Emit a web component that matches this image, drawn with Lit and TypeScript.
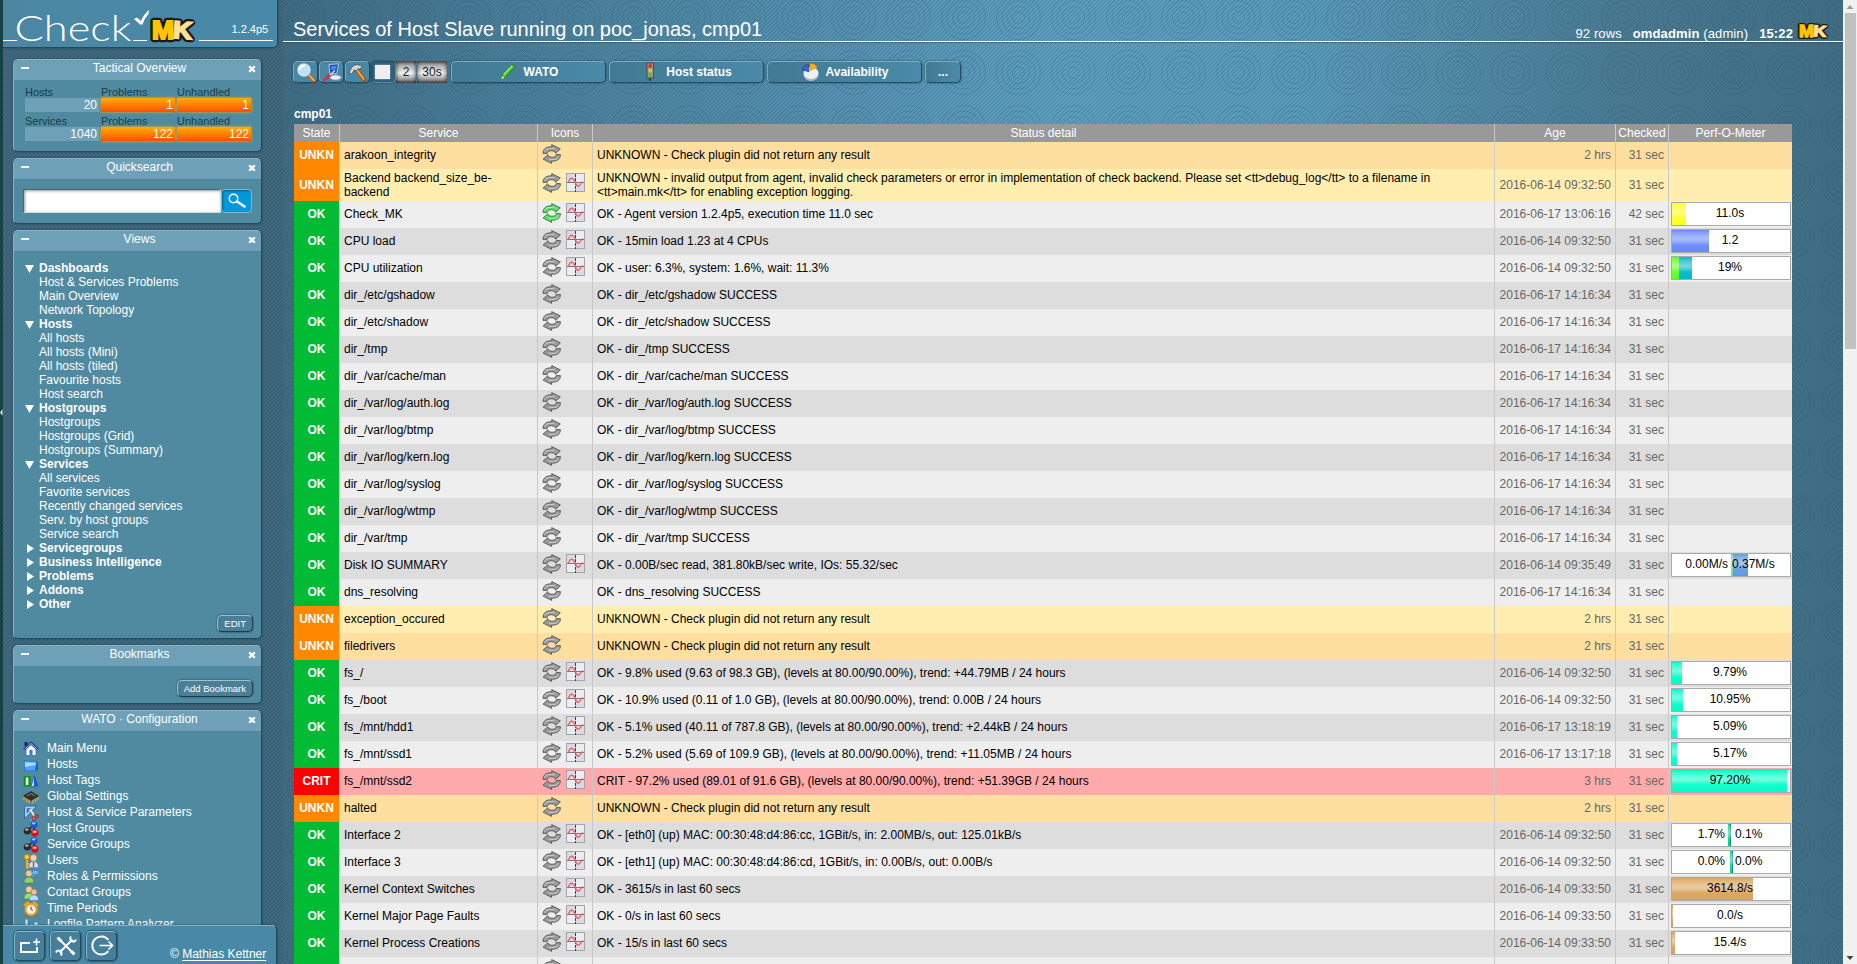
import { LitElement, html, svg, css, nothing } from "lit";
import { customElement, property } from "lit/decorators.js";

type Seg = [gap: number, width: number, color: string];
interface Perf { text?: string; left?: string; right?: string; segs: Seg[] }
interface Row { state: "OK" | "UNKN" | "CRIT"; name: string; detail: string; age: string; checked?: string; graph?: boolean; active?: boolean; tall?: boolean; perf?: Perf }

const ok = (name: string, detail: string, age: string, perf?: Perf, graph = true): Row => ({ state: "OK", name, detail: "OK - " + detail, age, perf, graph });
const local = (name: string): Row => ok(name, name + " SUCCESS", "2016-06-17 14:16:34", undefined, false);
const unkn = (name: string): Row => ({ state: "UNKN", name, detail: "UNKNOWN - Check plugin did not return any result", age: "2 hrs" });
const D = "2016-06-14 09:32:50";
const E = "2016-06-14 09:33:50";
const MINT = "#00ffc6";
const SAND = "#d9a25a";

const ROWS: Row[] = [
  unkn("arakoon_integrity"),
  { state: "UNKN", name: "Backend backend_size_be-backend", detail: "UNKNOWN - invalid output from agent, invalid check parameters or error in implementation of check backend. Please set <tt>debug_log</tt> to a filename in <tt>main.mk</tt> for enabling exception logging.", age: D, graph: true, tall: true },
  { ...ok("Check_MK", "Agent version 1.2.4p5, execution time 11.0 sec", "2016-06-17 13:06:16", { text: "11.0s", segs: [[0, 14, "#ffff20"]] }), checked: "42 sec", active: true },
  ok("CPU load", "15min load 1.23 at 4 CPUs", D, { text: "1.2", segs: [[0, 37, "#6688ff"]] }),
  ok("CPU utilization", "user: 6.3%, system: 1.6%, wait: 11.3%", D, { text: "19%", segs: [[0, 7, "#60ff20"], [0, 1, "#ff6000"], [0, 12, "#00b8c8"]] }),
  local("dir_/etc/gshadow"), local("dir_/etc/shadow"), local("dir_/tmp"), local("dir_/var/cache/man"), local("dir_/var/log/auth.log"),
  local("dir_/var/log/btmp"), local("dir_/var/log/kern.log"), local("dir_/var/log/syslog"), local("dir_/var/log/wtmp"), local("dir_/var/tmp"),
  ok("Disk IO SUMMARY", "0.00B/sec read, 381.80kB/sec write, IOs: 55.32/sec", "2016-06-14 09:35:49", { left: "0.00M/s", right: "0.37M/s", segs: [[59, 2, "#60e0a0"], [0, 15, "#6098e0"]] }),
  local("dns_resolving"),
  unkn("exception_occured"), unkn("filedrivers"),
  ok("fs_/", "9.8% used (9.63 of 98.3 GB), (levels at 80.00/90.00%), trend: +44.79MB / 24 hours", D, { text: "9.79%", segs: [[0, 10, MINT]] }),
  ok("fs_/boot", "10.9% used (0.11 of 1.0 GB), (levels at 80.00/90.00%), trend: 0.00B / 24 hours", D, { text: "10.95%", segs: [[0, 11, MINT]] }),
  ok("fs_/mnt/hdd1", "5.1% used (40.11 of 787.8 GB), (levels at 80.00/90.00%), trend: +2.44kB / 24 hours", "2016-06-17 13:18:19", { text: "5.09%", segs: [[0, 5, MINT]] }),
  ok("fs_/mnt/ssd1", "5.2% used (5.69 of 109.9 GB), (levels at 80.00/90.00%), trend: +11.05MB / 24 hours", "2016-06-17 13:17:18", { text: "5.17%", segs: [[0, 5, MINT]] }),
  { state: "CRIT", name: "fs_/mnt/ssd2", detail: "CRIT - 97.2% used (89.01 of 91.6 GB), (levels at 80.00/90.00%), trend: +51.39GB / 24 hours", age: "3 hrs", graph: true, perf: { text: "97.20%", segs: [[0, 115, MINT]] } },
  unkn("halted"),
  ok("Interface 2", "[eth0] (up) MAC: 00:30:48:d4:86:cc, 1GBit/s, in: 2.00MB/s, out: 125.01kB/s", D, { left: "1.7%", right: "0.1%", segs: [[56, 2, "#00e060"], [0, 1, "#0080e0"]] }),
  ok("Interface 3", "[eth1] (up) MAC: 00:30:48:d4:86:cd, 1GBit/s, in: 0.00B/s, out: 0.00B/s", D, { left: "0.0%", right: "0.0%", segs: [[58, 2, "#00e060"], [0, 1, "#0080e0"]] }),
  ok("Kernel Context Switches", "3615/s in last 60 secs", E, { text: "3614.8/s", segs: [[0, 81, SAND]] }),
  ok("Kernel Major Page Faults", "0/s in last 60 secs", E, { text: "0.0/s", segs: [[0, 1, SAND]] }),
  ok("Kernel Process Creations", "15/s in last 60 secs", E, { text: "15.4/s", segs: [[0, 3, SAND]] }),
];

const reload = (on = false) => {
  const fill = on ? "#62dc6c" : "#9b9b9b";
  const edge = on ? "#2a7a38" : "#555";
  const arrow = svg`<path d="M1 9.400C1 4.800 4.500 2.400 10 2.900L9.700 .6L18.300 4.900L13.600 9.300L12.800 7.400C8.600 6.200 6 6.600 5.200 9.400Z" fill=${fill} stroke=${edge} stroke-width=".9" stroke-linejoin="round"/><path d="M2.600 7.500C4 4.400 7 4 12.500 4.800" fill="none" stroke="#fff" stroke-opacity=".5" stroke-width="1"/>`;
  return html`<svg width="20" height="20" viewBox="0 0 20 20">${arrow}<g transform="rotate(180 9.700 10)">${arrow}</g></svg>`;
};
const graph = html`<svg width="20" height="20" viewBox="0 0 20 20"><rect x=".5" y=".5" width="18" height="18" fill="#dadae4" stroke="#a3a3a8"/><path d="M10 1h8v8h-8zM1 10h8v8H1z" fill="#ececf3"/><path d="M1 9.500h17" stroke="#777"/><path d="M9.500 1v18" stroke="#3c3c3c" stroke-dasharray="3 1"/><path d="M2.500 9C4 4.500 6.500 3.500 8.500 8C10 12 11.500 14.500 13.500 12.500C14.800 11 15.500 9 16.800 8.500" fill="none" stroke="#f0555c" stroke-width="1.200"/></svg>`;

const glass = html`<svg width="22" height="22" viewBox="0 0 22 22"><path d="M13.500 13l5.500 6" stroke="#c86a18" stroke-width="3.600" stroke-linecap="round"/><path d="M14 13l5 5.500" stroke="#ffb65a" stroke-width="1.500" stroke-linecap="round"/><circle cx="9" cy="8" r="6.300" fill="#bfe0fb" stroke="#d8e4ee" stroke-width="1.600"/><circle cx="9" cy="8" r="7.100" fill="none" stroke="#47728e" stroke-width=".6"/><path d="M5 8c0-3 2-4.500 5-4.500" stroke="#fff" stroke-width="1.800" fill="none"/></svg>`;
const paint = html`<svg width="22" height="22" viewBox="0 0 22 22"><ellipse cx="14.500" cy="15.500" rx="5.500" ry="2.600" fill="#e8edf4" stroke="#8b9bb5" stroke-width=".7"/><path d="M8 2.500l9.500-.7-1.700 9.700-7 .5z" fill="#1c4fb8" stroke="#d5e2f2" stroke-width=".8"/><path d="M10 4.500l5.500-.5-.6 3-4.400 1z" fill="#4f8fe8"/><path d="M3.500 18L9 12.800" stroke="#c9323e" stroke-width="3" stroke-linecap="round"/><path d="M8.800 13.200l5-4.700" stroke="#e9d3da" stroke-width="1.500"/></svg>`;
const hammer = html`<svg width="22" height="22" viewBox="0 0 22 22"><path d="M9.500 7.500L17.500 18" stroke="#a85413" stroke-width="3.800" stroke-linecap="round"/><path d="M10 8l7 9.500" stroke="#ffa34a" stroke-width="2"/><path d="M2 10.500L4.800 5.500C7.500 2 11 2 15 4.200L13 7.400 11.500 6.400 9 9.200 7.400 7.500 4.800 12z" fill="#d5dade" stroke="#47535c" stroke-width=".8"/></svg>`;
const pencil = html`<svg width="18" height="20" viewBox="0 0 18 20"><path d="M2 17.500L3.500 12.500L12.500 3C13.500 1.800 16.500 4 15.600 5.400L6.300 15.500Z" fill="#3fc32b" stroke="#1b761a" stroke-width=".8"/><path d="M4.600 12.800L13.300 3.600" stroke="#a6f58c" stroke-width="1.300"/><path d="M2 17.500l1.200-3.600 2.300 1.800z" fill="#f1e2b0"/></svg>`;
const light = html`<svg width="18" height="20" viewBox="0 0 18 20"><path d="M9 15v4" stroke="#333" stroke-width="1.500"/><rect x="6" y="1" width="6.500" height="15" fill="#a99a84" stroke="#54483a"/><circle cx="9.200" cy="3.900" r="2" fill="#e92a24"/><circle cx="9.200" cy="8.500" r="1.900" fill="#d8c33a"/><circle cx="9.200" cy="13" r="1.900" fill="#35c84a"/></svg>`;
const pie = html`<svg width="18" height="20" viewBox="1 0 18 20"><ellipse cx="11" cy="13" rx="7.500" ry="5.900" fill="#b0b7c5"/><ellipse cx="11" cy="11" rx="7.500" ry="5.900" fill="#eef0f5"/><path d="M9 10L2 7.800C2.500 4.500 5.500 2.500 8.500 2.200Z" fill="#2f68d0" stroke="#153f8d" stroke-width=".5"/><path d="M10 8.500V1.500C13.500 1.300 16 3 17.500 5.300Z" fill="#ffb021" stroke="#c77800" stroke-width=".5"/></svg>`;

const people = (a: string, b: string) => svg`<circle cx="6" cy="4.500" r="3.300" fill="#f3c99a" stroke="#9c7038" stroke-width=".6"/><path d="M1 14c0-4 2-6 5-6s5 2 5 6z" fill=${a} stroke="#47672d" stroke-width=".5"/>${b ? svg`<circle cx="11" cy="7" r="3" fill="#f7bfa2" stroke="#a35f4b" stroke-width=".6"/><path d="M6.500 15.500c0-4 2-5.500 4.500-5.500s4.500 1.500 4.500 5.500z" fill=${b} stroke="#4a78b0" stroke-width=".5"/>` : nothing}`;
const groups = svg`<path d="M4.500 9.500L10.500 4l1 8z" stroke="#222" fill="none" stroke-width="1.600"/><circle cx="4.300" cy="10" r="3.600" fill="#2b2b2b"/><ellipse cx="3.800" cy="8.600" rx="2" ry="1.200" fill="#aaa"/><circle cx="11" cy="3.800" r="3.500" fill="#1758d8"/><ellipse cx="10.800" cy="2.400" rx="1.900" ry="1.100" fill="#9fc4ff"/><circle cx="11.800" cy="12" r="3.700" fill="#d31616"/><ellipse cx="11.600" cy="10.700" rx="2.200" ry="1.200" fill="#ff9c9c"/>`;
const ICONS: Record<string, unknown> = {
  home: svg`<rect x="1.500" y="1" width="3" height="4" fill="#18256b"/><path d="M3 8v6.500h10V8L8 3.500z" fill="#f3f6fb" stroke="#3c5e9c" stroke-width=".7"/><path d="M1 8.500L8 2l7 6.500" fill="none" stroke="#1c3f8c" stroke-width="2.400"/><path d="M1.500 8.300L8 2.500l6.500 5.800" fill="none" stroke="#9fd1f7" stroke-width=".9"/><rect x="6.500" y="9" width="3" height="5.500" fill="#2b7fe0"/>`,
  folder: svg`<path d="M12 4l3 1v8l-4 1.500z" fill="#1d5fc4"/><path d="M1 3.500h4l1 1h7.500l-1 9.500H2z" fill="#4ba3f7" stroke="#1f68c8" stroke-width=".7"/><path d="M1.800 5.500h11l-.4 3C8 8 5 10 2 10z" fill="#a9d8ff"/>`,
  tags: svg`<rect x=".8" y="3" width="7" height="10.500" rx="1" fill="#178a22"/><rect x="2.800" y="4.500" width="2.600" height="7.500" fill="#e5ffe2"/><path d="M11.500 2l4 11.500h-8z" fill="#1b55cf"/><path d="M11 5v8H8.500z" fill="#c2ddff"/>`,
  chip: svg`<path d="M1 7v4M3.500 8.500v4.500M6 10v4.500M10 10v4.500M12.500 8.500v4.500M15 7v4" stroke="#e0a13a" stroke-width="1.400"/><path d="M.5 7L8 2.500 15.500 7 8 11.500z" fill="#35312d" stroke="#111" stroke-width=".5"/><path d="M4 7l4-2.500L12 7" fill="none" stroke="#8a8580"/>`,
  ruler: svg`<path d="M1.500 1h12L1.500 14z" fill="#a8cff5" stroke="#2e65ac"/><path d="M4 3.500h4l-4 4.500z" fill="#5089a5" stroke="#2e65ac" stroke-width=".7"/><path d="M7 4l5 8" stroke="#e6ecf2" stroke-width="1.800"/><path d="M8 15l5-3" stroke="#b6c3cf" stroke-width="1.300"/><circle cx="13.500" cy="11" r="1.700" fill="none" stroke="#c0242c" stroke-width="1.300"/><circle cx="10.800" cy="13.500" r="1.700" fill="none" stroke="#c0242c" stroke-width="1.300"/>`,
  groups,
  users: svg`<circle cx="3.800" cy="4" r="2.800" fill="#ffc832" stroke="#b77a0c"/><path d="M4 7v7.500h2M4 11h2" stroke="#f4b01e" stroke-width="2" fill="none"/><circle cx="10.500" cy="5" r="3.400" fill="#f6d0a2" stroke="#a77b45" stroke-width=".6"/><path d="M5.800 14.500c0-4 1.700-6 4.700-6s4.900 2 4.900 6z" fill="#cfe3f8" stroke="#5b83b5" stroke-width=".6"/><path d="M10.500 9v5" stroke="#d33" stroke-width="1.400"/>`,
  roles: svg`${people("#8fd162", "")}<ellipse cx="12.300" cy="3.500" rx="3.500" ry="2.300" fill="#6db4ff" stroke="#3670c4" stroke-width=".6"/><path d="M10 5.500l-1 2.500 2.500-2" fill="#6db4ff"/>`,
  contacts: people("#9fdc6e", "#b9dcff"),
  clock: svg`<path d="M2 4l3-2.500M14 4l-3-2.500" stroke="#f2a01c" stroke-width="2.600" stroke-linecap="round"/><path d="M4 14l-1.500 1.500M12 14l1.500 1.500" stroke="#a86508" stroke-width="1.500"/><circle cx="8" cy="8.500" r="5.500" fill="#f4f1e2" stroke="#f3a11d" stroke-width="2"/><path d="M8 5.500v3l2 1" stroke="#444" fill="none"/>`,
  log: svg`<path d="M2 2h3v11H2zM7 7h3v6H7zM11 5h4v8h-4z" fill="#cfe3f8" stroke="#3a70b0" stroke-width=".7"/>`,
};

const mkLogo = (w: number, h: number) => html`<svg width=${w} height=${h} viewBox="0 0 48 28" preserveAspectRatio="none"><g font-family="Liberation Sans" font-weight="bold" stroke="#181818" stroke-width="6.500" stroke-linejoin="round"><text x="24" y="22.500" font-size="24" textLength="19" lengthAdjust="spacingAndGlyphs" transform="rotate(4 34 14)">K</text><text x="3" y="23" font-size="25" textLength="22" lengthAdjust="spacingAndGlyphs">M</text></g><g font-family="Liberation Sans" font-weight="bold" stroke-width="2"><text x="24" y="22.500" font-size="24" textLength="19" lengthAdjust="spacingAndGlyphs" fill="#ffe093" stroke="#ffe093" transform="rotate(4 34 14)">K</text><text x="3" y="23" font-size="25" textLength="22" lengthAdjust="spacingAndGlyphs" fill="#ffc400" stroke="#ffc400">M</text></g></svg>`;

@customElement("perf-meter")
class PerfMeter extends LitElement {
  @property({ attribute: false }) perf!: Perf;
  static styles = css`
    :host { display: grid; width: 118px; height: 22px; border: 1px solid #aaa; background: #fff; font-size: 12px; color: #000; }
    .bar, .gloss, .text { grid-area: 1 / 1; }
    .bar { display: flex; }
    .gloss { background: linear-gradient(#fff0 0%, #fff3 12%, #ffffff73 40%, #ffffff55 52%, #fff1 68%, #fff0 100%); }
    .text { line-height: 21px; text-align: center; padding-right: 2px; }
    .pair { display: grid; grid-template-columns: 53px 53px; column-gap: 10px; padding: 0; }
    .l { text-align: right; }
    .rt { text-align: left; }
    .wide { grid-template-columns: 56px 57px; column-gap: 4px; }
  `;
  render() {
    const p = this.perf;
    return html`
      <div class="bar">${p.segs.map(([g, w, c]) => html`<div style="margin-left:${g}px;width:${w}px;background:${c}"></div>`)}</div>
      <div class="gloss"></div>
      ${p.text ? html`<div class="text">${p.text}</div>` : html`<div class="text pair ${p.left!.length > 5 ? "wide" : ""}"><span class="l">${p.left}</span><span class="rt">${p.right}</span></div>`}`;
  }
}

@customElement("snap-in")
class SnapIn extends LitElement {
  @property() heading = "";
  static styles = css`
    :host { display: flex; flex-direction: column; flex: none; width: 247px; margin-bottom: 6px; border: 1px solid; border-color: #86b5c9 #24495a #24495a #86b5c9; border-radius: 5px; background: #508aa1; box-shadow: 0 0 2px #1f3d4c; overflow: hidden; }
    .head { display: grid; grid-template-columns: 22px 1fr 18px; height: 20px; background: #6ea1b8; color: #fff; font-size: 12px; line-height: 17px; text-align: center; }
    .min { width: 8px; height: 2px; margin: 7px 0 0 7px; background: #fff; }
    .x { margin: 5px 0 0 5px; display: block; }
    .body { flex: 1; }
  `;
  render() {
    return html`<div class="head"><div class="min"></div><div>${this.heading}</div>
      <svg class="x" width="8" height="8" viewBox="0 0 8 8"><path d="M1.200 1.200l5.600 5.600M6.800 1.200l-5.600 5.600" stroke="#fff" stroke-width="2.300"/></svg></div>
      <div class="body"><slot></slot></div>`;
  }
}

const VIEWS: [string, string[] | null][] = [
  ["Dashboards", ["Host & Services Problems", "Main Overview", "Network Topology"]],
  ["Hosts", ["All hosts", "All hosts (Mini)", "All hosts (tiled)", "Favourite hosts", "Host search"]],
  ["Hostgroups", ["Hostgroups", "Hostgroups (Grid)", "Hostgroups (Summary)"]],
  ["Services", ["All services", "Favorite services", "Recently changed services", "Serv. by host groups", "Service search"]],
  ["Servicegroups", null], ["Business Intelligence", null], ["Problems", null], ["Addons", null], ["Other", null],
];
const WATO: [string, string][] = [
  ["home", "Main Menu"], ["folder", "Hosts"], ["tags", "Host Tags"], ["chip", "Global Settings"], ["ruler", "Host & Service Parameters"],
  ["groups", "Host Groups"], ["groups", "Service Groups"], ["users", "Users"], ["roles", "Roles & Permissions"], ["contacts", "Contact Groups"],
  ["clock", "Time Periods"], ["log", "Logfile Pattern Analyzer"],
];

@customElement("side-bar")
class SideBar extends LitElement {
  static styles = css`
    :host { display: flex; flex-direction: column; width: 280px; height: 964px; color: #fff; font-size: 12px; }
    svg { display: block; }
    .logo { flex: none; width: 274px; height: 47px; background: linear-gradient(90deg, #4b87a2, #4889a9); border: solid #24495a; border-width: 0 1px 1px 0; border-radius: 0 0 5px 0; box-shadow: 0 0 2px #1f3d4c; }
    .snaps { flex: 1; min-height: 0; overflow: hidden; display: flex; flex-direction: column; padding: 11px 0 0 10px; }
    .tact { display: grid; grid-template-columns: repeat(3, 74px); column-gap: 2px; padding: 4px 0 9px 11px; }
    .lab { height: 14px; line-height: 16px; font-size: 11px; color: #173c4d; }
    .val { height: 14px; line-height: 14px; margin-bottom: 1px; padding-right: 2px; text-align: right; background: #6ea1b8; }
    .bad { background: linear-gradient(#ffae00, #ff4f00); box-shadow: 0 0 3px #ffb000; }
    .quick { display: flex; align-items: center; height: 44px; padding-left: 9px; }
    .field { width: 196px; height: 22px; background: #fff; border: 1px solid; border-color: #45656f #cdd #cdd #45656f; box-shadow: inset 1px 1px 3px #999; }
    .go { display: grid; place-items: center; width: 29px; height: 22px; border: 1px solid #8ab5c8; border-radius: 4px; background: #0399dc; box-shadow: inset 1px 1px 2px #055f8c; }
    .views { padding: 10px 0 0 11px; line-height: 14px; height: 354px; }
    .top { display: flex; height: 14px; font-weight: bold; }
    .tri { width: 14px; padding-top: 3px; }
    .sub { padding-left: 14px; height: 14px; }
    .foot { display: flex; justify-content: flex-end; padding: 0 8px 6px 0; }
    .mini { height: 15px; line-height: 15px; padding: 0 6px; font-size: 9.5px; border: 1px solid; border-color: #9dc0cf #1d3f4f #1d3f4f #9dc0cf; border-radius: 5px; background: #4a7f97; box-shadow: 0 0 2px #18323f; }
    .book { padding-top: 14px; }
    .wato { padding: 9px 0 20px 9px; }
    .item { display: flex; align-items: center; gap: 8px; height: 16px; line-height: 16px; }
    .item svg { margin-top: 2px; }
    .bar { flex: none; display: flex; align-items: flex-start; width: 262px; height: 33px; padding: 5px 0 0 11px; gap: 5px; background: #4889a8; border: 1px solid; border-color: #7fb0c6 #24495a #24495a #4889a8; border-width: 1px 1px 0 0; border-radius: 0 5px 0 0; box-shadow: 0 0 2px #1f3d4c; }
    .btn { display: grid; place-items: center; width: 29px; height: 28px; border: 1px solid; border-color: #8bb6c9 #24495a #24495a #8bb6c9; border-radius: 5px; background: #467f9b; box-shadow: 0 0 1px 1px #20445499; }
    .copy { margin: 16px 0 0 48px; line-height: 14px; }
    .copy u { text-underline-offset: 2px; }
  `;
  render() {
    return html`
      <svg class="logo" viewBox="0 0 274 47">
        <path d="M0 40.500H14M130 40.500H144M196 40.500H270" stroke="#fff"/>
        <text x="11.500" y="40.500" font-family="Lato, Inter" font-weight="300" font-size="35" textLength="117" lengthAdjust="spacingAndGlyphs" fill="#fff">Check</text>
        <path d="M131 19l3-1.500 4 3.500q3-7 8-11l-.5 4q-4 4-6 10.500h-2.500z" fill="#fff"/>
        <svg x="146" y="16" width="48" height="28">${mkLogo(48, 28)}</svg>
        <text x="228.500" y="33" font-family="Liberation Sans" font-size="11" fill="#fff">1.2.4p5</text>
      </svg>
      <div class="snaps">
        <snap-in heading="Tactical Overview"><div class="tact">
          ${[["Hosts", "20", "1"], ["Services", "1040", "122"]].map(([n, a, b]) => html`
            <div class="lab">${n}</div><div class="lab">Problems</div><div class="lab">Unhandled</div>
            <div class="val">${a}</div><div class="val bad">${b}</div><div class="val bad">${b}</div>`)}
        </div></snap-in>
        <snap-in heading="Quicksearch"><div class="quick"><div class="field"></div><div class="go">
          <svg width="20" height="18" viewBox="0 0 20 18"><circle cx="6.500" cy="6.500" r="4.200" fill="none" stroke="#fff" stroke-width="1.500"/><path d="M10 9.500l7.500 5" stroke="#fff" stroke-width="2.500" stroke-linecap="round"/></svg>
        </div></div></snap-in>
        <snap-in heading="Views"><div class="views">
          ${VIEWS.map(([t, subs]) => html`<div class="top"><div class="tri"><svg width="9" height="9" viewBox="0 0 9 9">${subs ? svg`<path d="M0 1h9L4.500 9z" fill="#fff"/>` : svg`<path d="M2 0v9l7-4.500z" fill="#fff"/>`}</svg></div>${t}</div>
            ${(subs ?? []).map((s) => html`<div class="sub">${s}</div>`)}`)}
        </div><div class="foot"><div class="mini">EDIT</div></div></snap-in>
        <snap-in heading="Bookmarks"><div class="foot book"><div class="mini">Add Bookmark</div></div></snap-in>
        <snap-in heading="WATO · Configuration"><div class="wato">
          ${WATO.map(([i, t]) => html`<div class="item"><svg width="16" height="16" viewBox="0 0 16 16">${ICONS[i]}</svg>${t}</div>`)}
        </div></snap-in>
      </div>
      <div class="bar">
        <div class="btn"><svg width="24" height="22" viewBox="0 0 24 22"><path d="M12 8H3v9h16v-5" fill="none" stroke="#fff" stroke-width="2"/><path d="M15 7h7M18.500 3.500v7" stroke="#fff" stroke-width="1.600"/></svg></div>
        <div class="btn"><svg width="24" height="24" viewBox="0 0 24 24"><path d="M5.500 5.500L18 18M18.500 5.500L5.500 18.500" stroke="#fff" stroke-width="1.900"/><path d="M3.500 3.500l4 4M17 17l3.500 3.500" stroke="#fff" stroke-width="3"/><path d="M17 2.500q-2 3 1 4.500t4-1.500M7 21.500q1.500-3-1-4.500t-4 1.500" fill="none" stroke="#fff" stroke-width="2"/></svg></div>
        <div class="btn"><svg width="24" height="24" viewBox="0 0 24 24"><path d="M18.300 5.800A9 9 0 1 0 18.300 17.200" fill="none" stroke="#fff" stroke-width="1.900"/><path d="M9.500 11.500h13M18.500 7.500l4 4-4 4" fill="none" stroke="#fff" stroke-width="1.700"/></svg></div>
        <div class="copy">© <u>Mathias Kettner</u></div>
      </div>`;
  }
}

@customElement("app-root")
class AppRoot extends LitElement {
  static styles = css`
    :host { display: flex; width: 1857px; height: 964px; overflow: hidden; font-family: "Liberation Sans", Arial, sans-serif; font-size: 12px; background: #3c6478; }
    svg { display: block; }
    .edge { flex: none; width: 3px; box-sizing: border-box; padding-top: 409px; background: linear-gradient(90deg, #0d4745 0 2px, #2a3a44 2px); }
    .side { flex: none; width: 280px; background: url("data:image/svg+xml,%3Csvg xmlns='http://www.w3.org/2000/svg' width='4' height='4'%3E%3Cpath d='M0 3h1V2h1V1h1V0h1v1H3v1H2v1H1v1H0z' fill='%23102c3c' fill-opacity='.32'/%3E%3C/svg%3E"), linear-gradient(#42697d, #3f6a80); }
    .main { flex: none; width: 1560px; display: flex; flex-direction: column; overflow: hidden; background:
      url("data:image/svg+xml,%3Csvg xmlns='http://www.w3.org/2000/svg' width='4' height='4'%3E%3Cpath d='M0 3h1v1H0zM1 2h1v1H1zM2 1h1v1H2zM3 0h1v1H3z' fill='%2315384c' fill-opacity='.25'/%3E%3C/svg%3E"),
      url("data:image/svg+xml,%3Csvg xmlns='http://www.w3.org/2000/svg' width='55' height='55'%3E%3Cg fill='none' stroke='%2317405a' stroke-opacity='.11' stroke-width='1.500'%3E%3Ccircle cx='27.500' cy='27.500' r='22'/%3E%3Ccircle cx='27.500' cy='27.500' r='16.500'/%3E%3Ccircle cx='27.500' cy='27.500' r='11'/%3E%3Ccircle cx='27.500' cy='27.500' r='6'/%3E%3C/g%3E%3C/svg%3E") -7px -10.5px,
      linear-gradient(90deg, #416d84 0%, #4a7f9b 15%, #5e9fc0 50%, #5b9cbc 65%, #4a7c94 86%, #426f86 100%); }
    .main > * { flex: none; }
    .head { display: flex; align-items: flex-end; height: 41px; border-bottom: 1px solid #fff; color: #fff; box-shadow: 0 1px 1px #2345; }
    .title { flex: 1; padding-left: 10px; font-size: 20px; line-height: 23px; }
    .info { display: flex; align-items: flex-end; font-size: 13px; line-height: 14px; white-space: pre; letter-spacing: .12px; }
    .info b { margin-left: 11px; }
    .info svg { margin: 0 13px 1px 4px; }
    .tools { display: flex; height: 22px; margin: 19px 0 0 10px; }
    .ic, .nav { box-sizing: border-box; border: 1px solid; border-color: #7aadc4 #234c60 #234c60 #7aadc4; border-radius: 5px; background: #4988a4; box-shadow: 0 0 2px #1c3c4c; }
    .ic { display: grid; place-items: center; width: 25px; height: 22px; margin-right: 1px; overflow: hidden; }
    .dark { background: #2f6079; border-color: #234c60 #5d8ca2 #5d8ca2 #234c60; }
    .box { width: 15px; height: 14px; margin-right: 2px; background: #eee; box-shadow: 0 0 1px #fff; }
    .num { height: 22px; line-height: 22px; text-align: center; color: #222; background: linear-gradient(#666, #aaa 18%, #f2f2f2 55%, #999 85%, #555); box-shadow: inset 0 0 4px #222; }
    .n1 { width: 20px; margin: 0 1px 0 -1px; }
    .n2 { width: 30px; margin-right: 4px; }
    .nav { display: flex; align-items: center; justify-content: center; gap: 7px; width: 155px; margin-right: 3px; color: #fff; font-weight: bold; background: linear-gradient(90deg, #427993, #4a8aa8); }
    .more { width: 36px; }
    .group { margin: 23px 0 0 11px; height: 18px; line-height: 16px; color: #fff; font-weight: bold; }
    .table { width: 1498px; margin-left: 11px; }
    .row { display: grid; grid-template-columns: 45px 198px 55px 902px 121px 53px 124px; height: 27px; align-items: stretch; }
    .row > div { box-sizing: border-box; display: flex; align-items: center; padding: 0 4px 2px; border-left: 1px solid #c8c8c8; line-height: 14px; }
    .row > .st { padding: 0 0 2px; border: 0; justify-content: center; color: #fff; font-weight: bold; }
    .odd { background: #eee; } .even { background: #ddd; }
    .u.odd { background: #ffdf9f; } .u.even { background: #ffeeaf; }
    .c { background: #ffaaaa; }
    .tall { height: 32px; }
    .row.tall > div { padding-bottom: 1px; }
    .OK { background: #00bb33; } .UNKN { background: #ff8800; } .CRIT { background: #ff0000; }
    .row.th { height: 18px; background: #999; color: #fff; }
    .row.th > div { justify-content: center; padding: 0; }
    .row.th > div:first-child { border: 0; }
    .row > .icons { gap: 4px; padding: 0 0 3px 4px; }
    .row.tall > .icons { padding-bottom: 4px; }
    .row > .r { justify-content: flex-end; color: #666; }
    .row > .pf { padding: 1px 0 0 2px; align-items: flex-start; }
    .scroll { flex: none; width: 14px; height: 964px; display: flex; flex-direction: column; align-items: center; background: #f1f1f1; }
    .up { height: 13px; } .thumb { width: 11px; height: 336px; background: #c1c1c1; } .down { margin-top: auto; height: 9px; }
  `;
  render() {
    return html`
      <div class="edge"><svg width="3" height="7" viewBox="0 0 3 7"><path d="M2.500 0v7L0 3.500z" fill="#ddd"/></svg></div>
      <side-bar class="side"></side-bar>
      <div class="main">
        <div class="head">
          <div class="title">Services of Host Slave running on poc_jonas, cmp01</div>
          <div class="info"><span>92 rows</span><b>omdadmin</b><span> (admin)</span><b>15:22</b>${mkLogo(33, 18)}</div>
        </div>
        <div class="tools">
          <div class="ic">${glass}</div><div class="ic">${paint}</div><div class="ic">${hammer}</div><div class="ic dark"><div class="box"></div></div>
          <div class="num n1">2</div><div class="num n2">30s</div>
          <div class="nav">${pencil}WATO</div><div class="nav">${light}Host status</div><div class="nav">${pie}Availability</div><div class="nav more">...</div>
        </div>
        <div class="group">cmp01</div>
        <div class="table">
          <div class="row th">${["State", "Service", "Icons", "Status detail", "Age", "Checked", "Perf-O-Meter"].map((h) => html`<div>${h}</div>`)}</div>
          ${ROWS.map((r, i) => html`<div class="row ${i % 2 ? "even" : "odd"} ${r.state === "UNKN" ? "u" : r.state === "CRIT" ? "c" : ""} ${r.tall ? "tall" : ""}">
            <div class="st ${r.state}">${r.state}</div>
            <div>${r.name}</div>
            <div class="icons">${reload(r.active)}${r.graph ? graph : nothing}</div>
            <div>${r.detail}</div>
            <div class="r">${r.age}</div>
            <div class="r">${r.checked ?? "31 sec"}</div>
            <div class="pf">${r.perf ? html`<perf-meter .perf=${r.perf}></perf-meter>` : nothing}</div>
          </div>`)}
          <div class="row odd"><div class="st OK"></div><div></div><div class="icons">${reload()}</div><div></div><div></div><div></div><div></div></div>
        </div>
      </div>
      <div class="scroll"><svg class="up" width="14" height="13" viewBox="0 0 14 13"><path d="M3.500 9L7 5l3.500 4z" fill="#999"/></svg><div class="thumb"></div><svg class="down" width="14" height="9" viewBox="0 0 14 9"><path d="M3.500 1h7L7 5z" fill="#444"/></svg></div>`;
  }
}
